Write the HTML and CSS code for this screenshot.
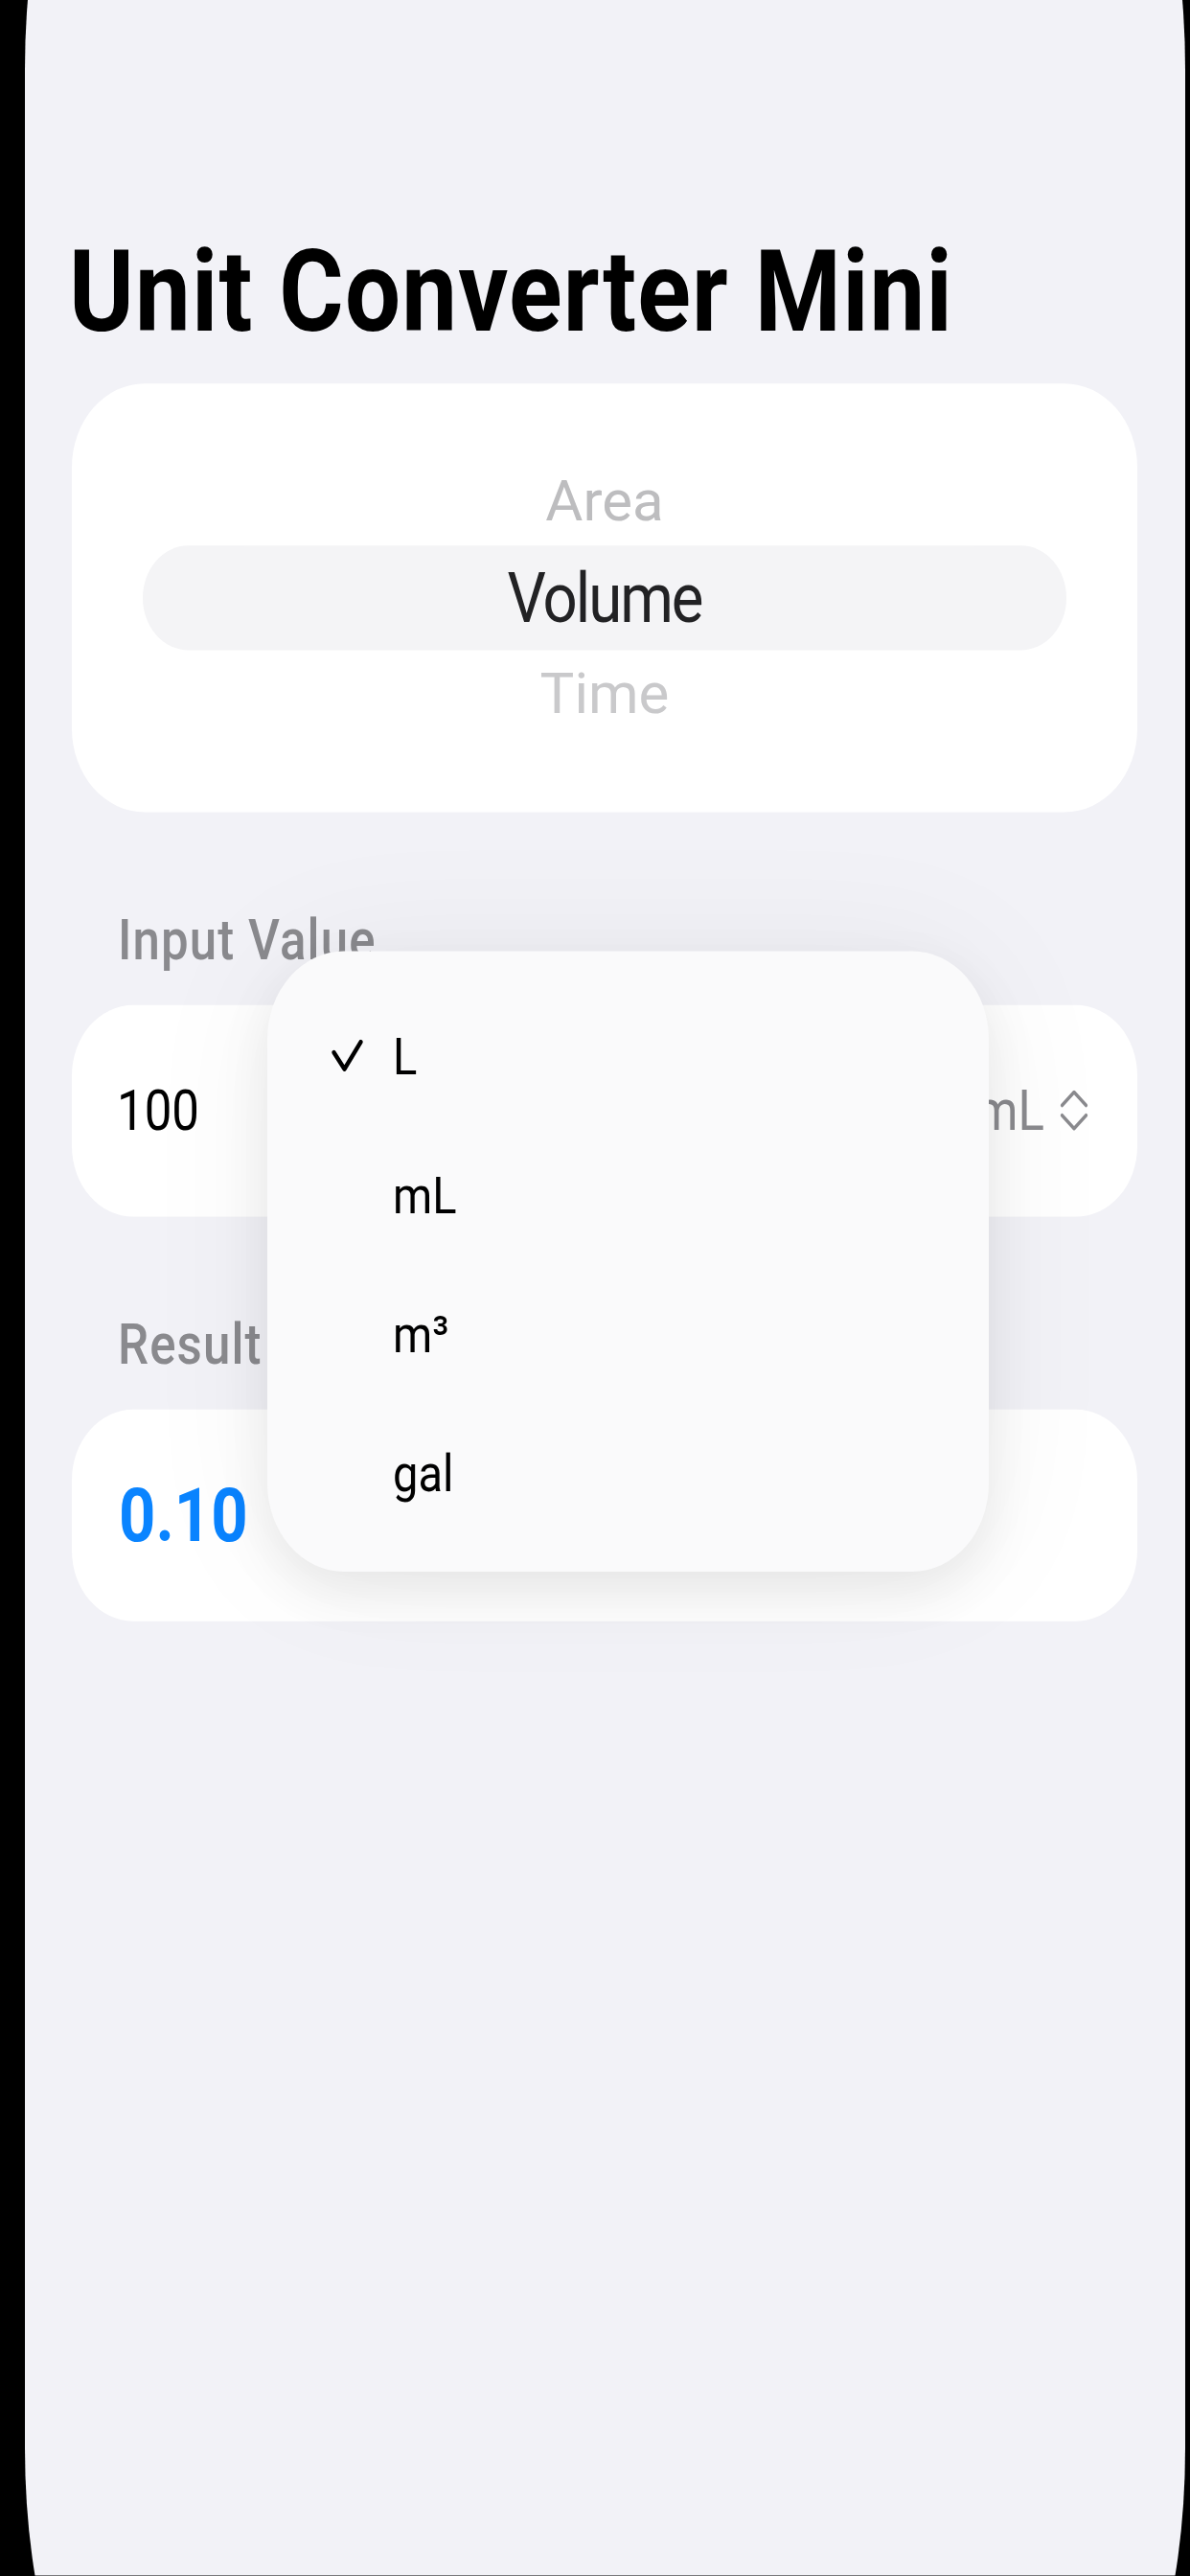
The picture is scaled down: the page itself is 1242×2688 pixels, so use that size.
FILE: index.html
```html
<!DOCTYPE html>
<html lang="en">
<head>
<meta charset="utf-8">
<title>Unit Converter Mini</title>
<link rel="stylesheet" href="styles.css">
</head>
<body>
<div class="stage">
  <div class="screen">
    <main class="content">
      <h1 class="title">Unit Converter Mini</h1>

      <section class="card picker">
        <div class="wheel-row far"><span class="wheel-text">Area</span></div>
        <div class="wheel-row sel"><span class="sel-text">Volume</span></div>
        <div class="wheel-row far"><span class="wheel-text far-low">Time</span></div>
      </section>

      <div class="label">Input Value</div>
      <section class="card field">
        <span class="value">100</span>
        <span class="unit">mL
          <svg class="updown" width="30" height="37" viewBox="0 0 30 37" aria-hidden="true">
            <path d="M2.5 14 L15 2 L27.5 14" />
            <path d="M2.5 23 L15 35 L27.5 23" />
          </svg>
        </span>
      </section>

      <div class="label">Result</div>
      <section class="card field result">
        <span class="result-value">0.10</span>
      </section>
    </main>

    <div class="menu">
      <div class="menu-item">
        <span class="check-slot">
          <svg class="check" width="33" height="30" viewBox="0 0 33 30" aria-hidden="true">
            <path d="M2.5 12 L13.5 27 L30.5 2.5" />
          </svg>
        </span>
        <span class="menu-text">L</span>
      </div>
      <div class="menu-item"><span class="check-slot"></span><span class="menu-text">mL</span></div>
      <div class="menu-item"><span class="check-slot"></span><span class="menu-text">m³</span></div>
      <div class="menu-item"><span class="check-slot"></span><span class="menu-text">gal</span></div>
    </div>
  </div>
</div>
</body>
</html>
```
FILE: styles.css
```css
html, body {
  margin: 0;
  padding: 0;
}

body {
  width: 1242px;
  height: 2688px;
  overflow: hidden;
  background: #000;
  font-family: Roboto, "Noto Sans", "Liberation Sans", sans-serif;
  -webkit-font-smoothing: antialiased;
}

.stage {
  display: flow-root;
  width: 1242px;
  height: 2337px;
  overflow: hidden;
  transform: scaleY(1.15);
  transform-origin: 0 0;
}

.screen {
  position: relative;
  margin: -197px 0 0 26px;
  width: 1211px;
  height: 2678px;
  background: #f2f2f7;
  border-radius: 100px / 260px;
  overflow: hidden;
}

.content {
  padding: 400px 50px 0 49px;
}

.title {
  margin: 0 0 0 -3px;
  font-size: 103px;
  font-weight: 700;
  line-height: 123.6px;
  color: #000;
  letter-spacing: 1.2px;
}

.card {
  background: #fff;
}

.picker {
  margin-top: 21px;
  height: 389px;
  display: flex;
  flex-direction: column;
  justify-content: center;
  border-radius: 76px;
}

.wheel-row {
  height: 80px;
  display: flex;
  align-items: center;
  justify-content: center;
}

.wheel-text {
  display: inline-block;
  font-size: 60px;
  color: #bdbdbf;
  transform: scaleY(0.85);
}

.far-low {
  color: #c9c9cb;
}

.wheel-row.sel {
  height: 95px;
  margin: 0 74px;
  border-radius: 47.5px;
  background: #f4f4f6;
}

.sel-text {
  font-size: 63.5px;
  color: #222224;
  letter-spacing: -2px;
}

.label {
  margin: 86px 0 29px 48px;
  font-size: 51px;
  font-weight: 500;
  line-height: 60px;
  color: #8a8a8e;
  letter-spacing: 1.1px;
}

.field {
  height: 192px;
  display: flex;
  align-items: center;
  justify-content: space-between;
  padding: 0 51px 0 47px;
  border-radius: 64px;
}

.value {
  font-size: 51px;
  color: #000;
}

.unit {
  display: flex;
  align-items: center;
  gap: 16px;
  font-size: 51px;
  color: #8a8a8e;
}

.updown path {
  fill: none;
  stroke: #8a8a8e;
  stroke-width: 3.2;
  stroke-linecap: round;
  stroke-linejoin: round;
}

.result {
  padding-left: 49px;
}

.result-value {
  font-size: 67px;
  font-weight: 700;
  color: #0a84ff;
}

.menu {
  position: absolute;
  left: 253px;
  top: 1060px;
  width: 753px;
  height: 563px;
  box-sizing: border-box;
  padding: 32px 0 26px;
  background: #fafafb;
  border-radius: 80px;
  box-shadow: 0 18px 50px rgba(0, 0, 0, 0.08), 0 0 140px rgba(0, 0, 0, 0.05);
}

.menu-item {
  height: 126px;
  display: flex;
  align-items: center;
}

.check-slot {
  display: flex;
  align-items: center;
  width: 64px;
  margin-left: 67px;
}

.check path {
  fill: none;
  stroke: #000;
  stroke-width: 4.2;
  stroke-linecap: round;
  stroke-linejoin: round;
}

.menu-text {
  font-size: 47px;
  color: #000;
}
```
